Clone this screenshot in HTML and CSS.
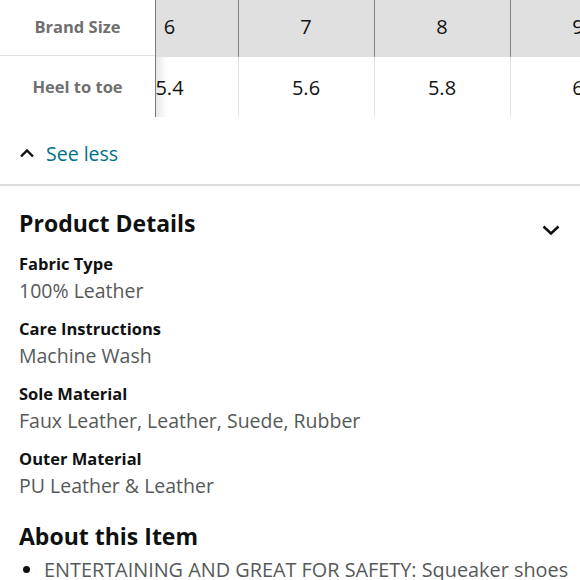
FILE: index.html
```html
<!DOCTYPE html>
<html>
<head>
<meta charset="utf-8">
<link rel="stylesheet" href="styles.css">
</head>
<body>
<div class="size-table">
  <div class="labels">
    <div class="label head">Brand Size</div>
    <div class="label">Heel to toe</div>
  </div>
  <div class="data-wrap">
    <div class="data">
      <div class="cell head">6</div>
      <div class="cell head">7</div>
      <div class="cell head">8</div>
      <div class="cell head">9</div>
      <div class="cell">5.4</div>
      <div class="cell">5.6</div>
      <div class="cell">5.8</div>
      <div class="cell">6</div>
    </div>
  </div>
</div>
<div class="see-less">
  <svg class="chev-up" width="16" height="10" viewBox="0 0 16 10"><path d="M2 8.5 L8 2.5 L14 8.5" fill="none" stroke="#0f1111" stroke-width="2.4"/></svg>
  <span>See less</span>
</div>
<div class="details">
  <div class="details-head">
    <h2>Product Details</h2>
    <svg class="chev-down" width="20" height="14" viewBox="0 0 20 14"><path d="M2.5 3.5 L10 10.5 L17.5 3.5" fill="none" stroke="#0f1111" stroke-width="2.6"/></svg>
  </div>
  <dl class="attrs">
    <div class="attr"><dt>Fabric Type</dt><dd>100% Leather</dd></div>
    <div class="attr"><dt>Care Instructions</dt><dd>Machine Wash</dd></div>
    <div class="attr"><dt>Sole Material</dt><dd>Faux Leather, Leather, Suede, Rubber</dd></div>
    <div class="attr"><dt>Outer Material</dt><dd>PU Leather &amp; Leather</dd></div>
  </dl>
  <h2 class="about">About this Item</h2>
  <ul class="bullets">
    <li>ENTERTAINING AND GREAT FOR SAFETY: Squeaker shoes</li>
  </ul>
</div>
</body>
</html>
```

FILE: styles.css
```css
* { box-sizing: border-box; }
body {
  margin: 0;
  font-family: "Open Sans", "Noto Sans", sans-serif;
  color: #0f1111;
  background: #fff;
  width: 580px;
  overflow: hidden;
}
.size-table {
  display: flex;
  height: 117px;
}
.labels {
  width: 155px;
  flex: none;
  display: flex;
  flex-direction: column;
}
.label {
  height: 61px;
  display: flex;
  align-items: center;
  justify-content: center;
  font-weight: 700;
  font-size: 16.5px;
  color: #6f6f6f;
}
.label.head {
  height: 56px;
  padding-bottom: 3px;
  border-bottom: 1px solid #e3e3e3;
}
.data-wrap {
  flex: 1;
  overflow: hidden;
  border-left: 1.5px solid #7c7c7c;
  box-shadow: inset 14px 0 10px -10px rgba(0,0,0,0.12);
}
.data {
  margin-left: -54.5px;
  display: grid;
  grid-template-columns: repeat(4, 136px);
  grid-template-rows: 57px 60px;
}
.cell {
  display: flex;
  align-items: center;
  justify-content: center;
  font-size: 20px;
  color: #111;
  border-left: 1px solid #e6e6e6;
}
.cell.head {
  background: #e0e0e0;
  border-left: 1.5px solid #858585;
  padding-bottom: 5px;
}
.cell:nth-child(1), .cell:nth-child(5) { border-left: none; }
.see-less {
  height: 69px;
  display: flex;
  align-items: center;
  gap: 11px;
  padding: 5px 0 0 19px;
  border-bottom: 2px solid #dcdcdc;
  font-size: 19.5px;
  color: #007185;
}
.details {
  padding: 0 19px;
}
.details-head {
  display: flex;
  align-items: flex-start;
  justify-content: space-between;
  height: 65px;
  padding-top: 22px;
}
.details-head .chev-down { margin-top: 15px; }
h2 {
  margin: 0;
  font-size: 23px;
  line-height: 30px;
  font-weight: 700;
}
.attrs {
  margin: 0;
  display: flex;
  flex-direction: column;
  gap: 12px;
}
.attr dt {
  font-weight: 700;
  font-size: 16.5px;
  line-height: 26px;
}
.attr dd {
  margin: 0;
  font-size: 19.5px;
  line-height: 27px;
  color: #565959;
}
.about {
  margin-top: 22px;
}
.bullets {
  margin: 5px 0 0;
  padding-left: 25px;
  font-size: 19.85px;
  color: #565959;
  white-space: nowrap;
}
.bullets li::marker { color: #0f1111; }
```
